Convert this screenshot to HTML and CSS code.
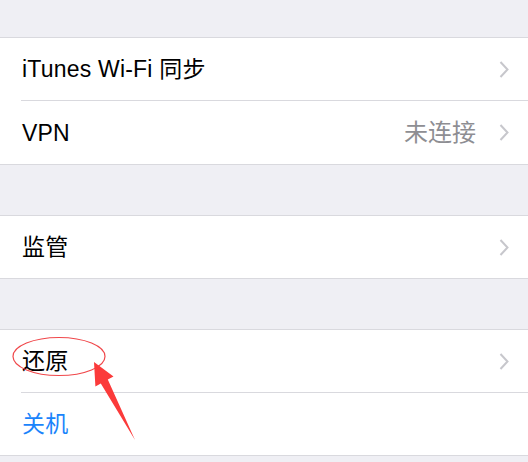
FILE: index.html
```html
<!DOCTYPE html>
<html lang="zh-CN">
<head>
<meta charset="utf-8">
<title>通用</title>
<link rel="stylesheet" href="styles.css">
</head>
<body>
<div class="page">
  <div class="gap gap-top"></div>
  <div class="group">
    <div class="row">
      <span class="label">iTunes Wi-Fi 同步</span>
      <span class="right"><svg class="chev" viewBox="0 0 10 17" width="10" height="17"><polyline points="1.5,1 8.5,8.5 1.5,16"/></svg></span>
    </div>
    <div class="sep"></div>
    <div class="row row-tall">
      <span class="label">VPN</span>
      <span class="right"><span class="value">未连接</span><svg class="chev" viewBox="0 0 10 17" width="10" height="17"><polyline points="1.5,1 8.5,8.5 1.5,16"/></svg></span>
    </div>
  </div>
  <div class="gap"></div>
  <div class="group">
    <div class="row">
      <span class="label">监管</span>
      <span class="right"><svg class="chev" viewBox="0 0 10 17" width="10" height="17"><polyline points="1.5,1 8.5,8.5 1.5,16"/></svg></span>
    </div>
  </div>
  <div class="gap"></div>
  <div class="group">
    <div class="row">
      <span class="label">还原</span>
      <span class="right"><svg class="chev" viewBox="0 0 10 17" width="10" height="17"><polyline points="1.5,1 8.5,8.5 1.5,16"/></svg></span>
    </div>
    <div class="sep"></div>
    <div class="row">
      <span class="label link">关机</span>
    </div>
  </div>
  <div class="gap"></div>
  <svg class="annot" viewBox="0 0 528 462" width="528" height="462">
    <ellipse cx="59" cy="356.5" rx="46" ry="19" class="ring"/>
    <polygon class="arrow" points="94,362 113.5,376.5 107.8,379.6 135,440 100.8,383.4 95.4,386.5"/>
  </svg>
</div>
</body>
</html>
```
FILE: styles.css
```css
html, body {
  margin: 0;
  padding: 0;
  background: #efeff4;
}
.page {
  position: relative;
  width: 528px;
  height: 462px;
  overflow: hidden;
  font-family: "Liberation Sans", "Noto Sans CJK SC", sans-serif;
  color: #000;
}
.gap {
  height: 50px;
}
.gap-top {
  height: 37px;
}
.group {
  background: #fff;
  border-top: 1px solid #d9d9de;
  border-bottom: 1px solid #d9d9de;
}
.row {
  height: 62px;
  display: flex;
  align-items: center;
  justify-content: space-between;
  padding: 0 19px 0 22px;
}
.row-tall {
  height: 63px;
}
.sep {
  height: 1px;
  margin-left: 21px;
  background: #d9d9de;
}
.label {
  font-size: 23px;
  line-height: 28px;
  letter-spacing: 0.2px;
}
.link {
  color: #1a84fb;
}
.right {
  display: flex;
  align-items: center;
  gap: 23px;
}
.value {
  font-size: 24px;
  line-height: 28px;
  color: #8e8e93;
}
.chev {
  display: block;
}
.chev polyline {
  fill: none;
  stroke: #c7c7cc;
  stroke-width: 2;
}
.annot {
  position: absolute;
  left: 0;
  top: 0;
  pointer-events: none;
}
.ring {
  fill: none;
  stroke: #f0474a;
  stroke-width: 1.2;
}
.arrow {
  fill: #fb3a3a;
}
```
